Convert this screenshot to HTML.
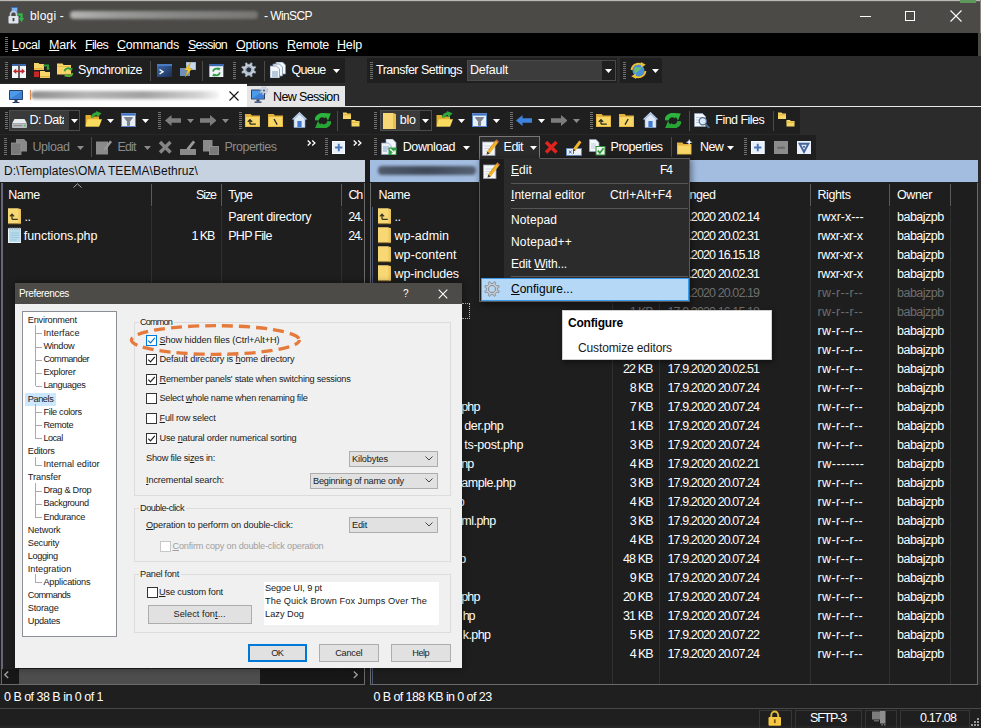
<!DOCTYPE html>
<html><head><meta charset="utf-8"><title>WinSCP</title>
<style>
html,body{margin:0;padding:0;}
body{width:981px;height:728px;overflow:hidden;background:#1b1b1b;font-family:"Liberation Sans", sans-serif;position:relative;}
#r{position:absolute;left:0;top:0;width:981px;height:728px;overflow:hidden;}
#r div,#r svg,#r span{position:absolute;box-sizing:border-box;}
#r u{text-decoration:underline;text-underline-offset:1px;}

.grip{width:3px;background-image:repeating-linear-gradient(to bottom,#707070 0 1px,transparent 1px 2px);}

</style></head><body><div id="r">
<div style="left:0px;top:0px;width:981px;height:33px;background:#4b4a46;"></div>
<div style="left:0px;top:0px;width:981px;height:1px;background:#b8b8b4;"></div>
<div style="left:0px;top:1px;width:981px;height:1px;background:#5c5b57;"></div>
<div style="left:960px;top:0px;width:16px;height:2.5px;background:#5f985c;"></div>
<div style="left:979.5px;top:0px;width:1.5px;height:33px;background:#8a8985;"></div>
<svg style="left:8px;top:7px" width="17" height="17" viewBox="0 0 17 17"><rect x="3" y="0" width="7" height="6" rx="0.600" fill="#3b6fc6"/><rect x="4" y="1" width="5" height="3.500" fill="#7fb3f0"/><path d="M2.500 9.500V7.500a3 3 0 0 1 6 0v2" stroke="#c9ced6" stroke-width="1.600" fill="none"/><rect x="0.500" y="9" width="10" height="7.500" rx="0.800" fill="#dfe4ea"/><rect x="4.600" y="11" width="1.800" height="3.200" fill="#3a3f48"/><path d="M9 7.500h4.500v4" stroke="#2fb34a" stroke-width="2.400" fill="none"/><path d="M10.800 11l2.700 4.200l2.700-4.200z" fill="#2fb34a"/></svg>
<div style="top:8.0px;height:17px;line-height:17px;font-size:12px;color:#fff;white-space:pre;letter-spacing:0.188px;left:30px;">blogi -</div>
<div style="top:8.0px;height:17px;line-height:17px;font-size:12px;color:#fff;white-space:pre;letter-spacing:-0.584px;left:264px;">- WinSCP</div>
<div style="left:70px;top:11px;width:188px;height:8px;background:linear-gradient(90deg,#b4b4b2,#9a9a98 25%,#868684 60%,#777673);filter:blur(1.6px);border-radius:4px;"></div>
<div style="left:860px;top:16px;width:10.5px;height:1px;background:#fff;"></div>
<div style="left:905px;top:11px;width:10px;height:10px;border:1px solid #fff;"></div>
<svg style="left:950px;top:10px" width="12" height="12" viewBox="0 0 12 12"><path d="M0.5 0.5L11.5 11.5M11.5 0.5L0.5 11.5" stroke="#fff" stroke-width="1.1" fill="none"/></svg>
<div style="left:0px;top:33px;width:978px;height:23px;background:#000;"></div>
<div style="left:978px;top:33px;width:3px;height:23px;background:#4a4946;"></div>
<div class="grip" style="left:5px;top:37px;height:16px"></div>
<div style="top:36.3px;height:18px;line-height:18px;font-size:12.5px;color:#fff;white-space:pre;letter-spacing:-0.378px;left:12px;"><u>L</u>ocal</div>
<div style="top:36.3px;height:18px;line-height:18px;font-size:12.5px;color:#fff;white-space:pre;letter-spacing:-0.195px;left:49px;"><u>M</u>ark</div>
<div style="top:36.3px;height:18px;line-height:18px;font-size:12.5px;color:#fff;white-space:pre;letter-spacing:-0.681px;left:85px;"><u>F</u>iles</div>
<div style="top:36.3px;height:18px;line-height:18px;font-size:12.5px;color:#fff;white-space:pre;letter-spacing:-0.240px;left:117px;"><u>C</u>ommands</div>
<div style="top:36.3px;height:18px;line-height:18px;font-size:12.5px;color:#fff;white-space:pre;letter-spacing:-0.783px;left:188px;"><u>S</u>ession</div>
<div style="top:36.3px;height:18px;line-height:18px;font-size:12.5px;color:#fff;white-space:pre;letter-spacing:-0.156px;left:236px;"><u>O</u>ptions</div>
<div style="top:36.3px;height:18px;line-height:18px;font-size:12.5px;color:#fff;white-space:pre;letter-spacing:-0.297px;left:287px;"><u>R</u>emote</div>
<div style="top:36.3px;height:18px;line-height:18px;font-size:12.5px;color:#fff;white-space:pre;letter-spacing:-0.180px;left:337px;"><u>H</u>elp</div>
<div style="left:0px;top:56px;width:981px;height:28px;background:#2b2b2b;"></div>
<div style="left:0px;top:58px;width:345px;height:25px;background:#1f1f1f;"></div>
<div style="left:367px;top:58px;width:250px;height:25px;background:#1f1f1f;"></div>
<div style="left:620px;top:58px;width:42px;height:25px;background:#1f1f1f;"></div>
<div class="grip" style="left:5px;top:62px;height:17px"></div>
<div class="grip" style="left:233px;top:62px;height:17px"></div>
<div class="grip" style="left:370px;top:62px;height:17px"></div>
<div class="grip" style="left:623px;top:62px;height:17px"></div>
<svg style="left:12px;top:63.5px" width="14" height="14" viewBox="0 0 14 14"><rect x="0" y="0" width="6.3" height="14" fill="#f2f6fb"/><rect x="7.7" y="0" width="6.3" height="14" fill="#f2f6fb"/><rect x="0" y="0" width="6.3" height="2" fill="#3c68b0"/><rect x="7.7" y="0" width="6.3" height="2" fill="#3c68b0"/><path d="M1 7.3L4.2 4.6V6.4H9.8V4.6L13 7.3L9.8 10V8.2H4.2V10Z" fill="#c2272d"/></svg>
<svg style="left:34px;top:61.5px" width="17" height="16.5" viewBox="0 0 17 16.5"><path d="M0 1h4.5l1 1h4.5v6h-10z" fill="#f6d569"/><path d="M0 6.8h10" stroke="#d9a93a" stroke-width="1"/><path d="M6 9h4.5l1 1h4.5v6h-10z" fill="#f6d569"/><path d="M6 14.8h10" stroke="#d9a93a" stroke-width="1"/><rect x="0" y="9.5" width="5" height="5.5" fill="#c62828"/><path d="M9.5 3.5h4.5v3.5" stroke="#2f9e3a" stroke-width="2" fill="none"/><path d="M12 6l2 2.6l2-2.6z" fill="#2f9e3a"/></svg>
<svg style="left:57px;top:62px" width="17" height="16" viewBox="0 0 17 16"><path d="M0 1.5h5.5l1.2 1.5H14v9.5H0z" fill="#f6d569"/><path d="M0 4.5h14" stroke="#e7bd4c" stroke-width="1"/><path d="M7.5 9.2a3.6 3.6 0 0 1 6.3-1.6" stroke="#2f9e3a" stroke-width="1.8" fill="none"/><path d="M12.3 5.8l3.6.4l-1.7 3.2z" fill="#2f9e3a"/><path d="M15.5 11a3.6 3.6 0 0 1-6.3 1.8" stroke="#5cb83a" stroke-width="1.8" fill="none"/><path d="M10.6 14.8l-3.5-.6l1.8-3z" fill="#5cb83a"/></svg>
<div style="top:61.3px;height:18px;line-height:18px;font-size:12.5px;color:#fff;white-space:pre;letter-spacing:-0.436px;left:78px;">Synchronize</div>
<svg style="left:156.5px;top:63.7px" width="15" height="13" viewBox="0 0 15 13"><defs><linearGradient id="tg" x1="0" y1="0" x2="1" y2="1"><stop offset="0" stop-color="#3d6cb0"/><stop offset="1" stop-color="#1c2f55"/></linearGradient></defs><rect width="15" height="13" fill="url(#tg)"/><rect width="15" height="2" fill="#4a7cc4"/><path d="M2.5 5.5L6 7.8L2.5 10" stroke="#fff" stroke-width="1.4" fill="none"/></svg>
<svg style="left:179.5px;top:62px" width="16" height="15" viewBox="0 0 16 15"><rect x="6" y="0" width="10" height="8" fill="#9fb6d6"/><rect x="0" y="6" width="10" height="8" fill="#6f8fbd"/><rect x="7" y="1" width="8" height="6" fill="#c8d8ec"/><path d="M10.5 0.5L4.5 8h3.2L5.2 15L12 6.5H8.6z" fill="#f7d02c" stroke="#b98f0c" stroke-width="0.5"/></svg>
<svg style="left:209px;top:63.8px" width="14.5" height="13.5" viewBox="0 0 14.5 13.5"><rect width="14.5" height="13.5" fill="#eef3f9"/><rect width="14.5" height="2.2" fill="#3c68b0"/><rect x="0" y="0" width="14.5" height="13.5" fill="none" stroke="#3c68b0" stroke-width="1"/><path d="M4 7.5a3.4 3.4 0 0 1 5.6-2" stroke="#2e9a3c" stroke-width="1.7" fill="none"/><path d="M8.3 3.4l3.3.5l-1.5 2.9z" fill="#2e9a3c"/><path d="M10.8 8.3a3.4 3.4 0 0 1-5.6 2.2" stroke="#2e9a3c" stroke-width="1.7" fill="none"/><path d="M6.4 12.5l-3.2-.6l1.6-2.7z" fill="#2e9a3c"/></svg>
<svg style="left:241px;top:62.3px" width="15.5" height="15.5" viewBox="0 0 16 16"><g transform="translate(8 8) rotate(22.5)"><path d="M5.60 -1.07L7.55 -0.89L7.55 0.89L5.60 1.07L4.71 3.20L5.97 4.71L4.71 5.97L3.20 4.71L1.07 5.60L0.89 7.55L-0.89 7.55L-1.07 5.60L-3.20 4.71L-4.71 5.97L-5.97 4.71L-4.71 3.20L-5.60 1.07L-7.55 0.89L-7.55 -0.89L-5.60 -1.07L-4.71 -3.20L-5.97 -4.71L-4.71 -5.97L-3.20 -4.71L-1.07 -5.60L-0.89 -7.55L0.89 -7.55L1.07 -5.60L3.20 -4.71L4.71 -5.97L5.97 -4.71L4.71 -3.20Z" fill="#c9d3e0" stroke="#8e9aac" stroke-width="0.600"/><circle r="2.500" fill="#2a3240"/><circle r="3.600" fill="none" stroke="#8e9aac" stroke-width="0.700"/></g></svg>
<svg style="left:270px;top:61.8px" width="16" height="16.5" viewBox="0 0 16 16.5"><path d="M6 0h6.5l3 3v9h-9.5z" fill="#f4f7fb" stroke="#7c93b3" stroke-width="0.8"/><path d="M3 2h6.5l3 3v9h-9.5z" fill="#f4f7fb" stroke="#7c93b3" stroke-width="0.8"/><path d="M0 4h6.5l3 3v9h-9.5z" fill="#f4f7fb" stroke="#7c93b3" stroke-width="0.8"/><path d="M2 10h6M2 12h6M2 14h6" stroke="#6f8fbd" stroke-width="0.9"/></svg>
<div style="top:61.3px;height:18px;line-height:18px;font-size:12.5px;color:#fff;white-space:pre;letter-spacing:-0.706px;left:291.5px;">Queue</div>
<svg style="left:333.0px;top:69px" width="7" height="4" viewBox="0 0 7 4"><path d="M0 0H7L3.5 4Z" fill="#fff"/></svg>
<div style="top:61.3px;height:18px;line-height:18px;font-size:12.5px;color:#fff;white-space:pre;letter-spacing:-0.513px;left:376px;">Transfer Settings</div>
<div style="left:467px;top:60px;width:149px;height:21px;background:#3c3c3c;border:1px solid #4a4a4a;"></div>
<div style="left:602px;top:61px;width:13px;height:19px;background:#1f1f1f;"></div>
<svg style="left:605.0px;top:69px" width="7" height="4" viewBox="0 0 7 4"><path d="M0 0H7L3.5 4Z" fill="#fff"/></svg>
<div style="top:61.3px;height:18px;line-height:18px;font-size:12.5px;color:#fff;white-space:pre;letter-spacing:-0.230px;left:470px;">Default</div>
<svg style="left:630px;top:62px" width="16.5" height="16.5" viewBox="0 0 16.5 16.5"><circle cx="8.5" cy="8.5" r="6" fill="#4a90d8"/><path d="M5 5.5c2-1 4 1 6-.5c.5 2-1 3-2.2 3.2c-.6 2-2.6 1.6-3.200 3.300c-1.700-1.500-1.800-4.200-.6-6z" fill="#6fc06a"/><path d="M1.600 8a7 7 0 0 1 11-5" stroke="#e9c23a" stroke-width="2" fill="none"/><path d="M10.800 0l5 2.800l-4.600 2.600z" fill="#e9c23a"/><path d="M15.400 9a7 7 0 0 1-11 5" stroke="#e9c23a" stroke-width="2" fill="none"/><path d="M6.200 17l-5-2.800l4.600-2.600z" fill="#e9c23a"/></svg>
<svg style="left:652.0px;top:69px" width="7" height="4" viewBox="0 0 7 4"><path d="M0 0H7L3.5 4Z" fill="#fff"/></svg>
<div style="left:150px;top:61px;width:1px;height:20px;background:#4a4a4a;"></div>
<div style="left:202px;top:61px;width:1px;height:20px;background:#4a4a4a;"></div>
<div style="left:264px;top:61px;width:1px;height:20px;background:#4a4a4a;"></div>
<div style="left:0px;top:84px;width:981px;height:24px;background:#2b2b2b;"></div>
<div style="left:345px;top:106px;width:636px;height:1px;background:#e8e8e8;"></div>
<div style="left:0px;top:84px;width:247px;height:23px;background:#ffffff;"></div>
<div style="left:247px;top:86px;width:98px;height:21px;background:#e6e6e6;"></div>
<svg style="left:9px;top:89.5px" width="14" height="13.3" viewBox="0 0 14 13.3"><rect x="0" y="0" width="14" height="10" rx="0.8" fill="#2a3f6a"/><rect x="1" y="1" width="12" height="8" fill="#4c9be8"/><path d="M1 9L13 1V9z" fill="#3b82d6"/><rect x="5.5" y="10" width="3" height="2" fill="#2a3f6a"/><rect x="3.5" y="12" width="7" height="1.300" fill="#2a3f6a"/></svg>
<svg style="left:251px;top:86px" width="18" height="17" viewBox="0 0 18 17"><g transform="translate(0 3.500)"><rect x="0" y="0" width="14" height="10" rx="0.8" fill="#2a3f6a"/><rect x="1" y="1" width="12" height="8" fill="#4c9be8"/><path d="M1 9L13 1V9z" fill="#3b82d6"/><rect x="5.5" y="10" width="3" height="2" fill="#2a3f6a"/><rect x="3.5" y="12" width="7" height="1.300" fill="#2a3f6a"/></g><g transform="translate(13 4.500)"><circle r="3.300" fill="none" stroke="#b9c4d4" stroke-width="2.200" stroke-dasharray="1.600 1"/><circle r="2.600" fill="#c7d0dd"/><circle r="1.100" fill="#5a6a80"/></g></svg>
<div style="top:87.8px;height:18px;line-height:18px;font-size:12.5px;color:#000;white-space:pre;letter-spacing:-0.632px;left:273px;">New Session</div>
<svg style="left:228.5px;top:90.5px" width="10" height="10" viewBox="0 0 10 10"><path d="M0.5 0.5L9.5 9.5M9.5 0.5L0.5 9.5" stroke="#111" stroke-width="1.1" fill="none"/></svg>
<div style="left:31px;top:91px;width:188px;height:8px;background:linear-gradient(90deg,#8f8f8f,#b5b5b5 30%,#a2a2a2 60%,#d4d4d4 90%,#f4f4f4);filter:blur(1.4px);border-radius:4px;"></div>
<div style="left:30px;top:90px;width:1px;height:10px;background:#d98a50;"></div>
<div style="left:0px;top:108px;width:981px;height:52px;background:#2b2b2b;"></div>
<div style="left:0px;top:107.5px;width:800px;height:26px;background:#1f1f1f;"></div>
<div style="left:0px;top:134.5px;width:816px;height:25px;background:#1f1f1f;"></div>
<div style="left:0px;top:133.5px;width:800px;height:1px;background:#282828;"></div>
<div class="grip" style="left:5px;top:112px;height:17px"></div>
<div class="grip" style="left:157.5px;top:112px;height:17px"></div>
<div class="grip" style="left:238.5px;top:112px;height:17px"></div>
<div class="grip" style="left:374px;top:112px;height:17px"></div>
<div class="grip" style="left:509.5px;top:112px;height:17px"></div>
<div class="grip" style="left:590px;top:112px;height:17px"></div>
<div class="grip" style="left:4px;top:138px;height:17px"></div>
<div class="grip" style="left:324.5px;top:138px;height:17px"></div>
<div class="grip" style="left:374px;top:138px;height:17px"></div>
<div class="grip" style="left:744px;top:138px;height:17px"></div>
<div style="left:9px;top:110px;width:71px;height:21px;background:#3a3a3a;border:1px solid #4c4c4c;"></div>
<div style="left:69px;top:111px;width:10px;height:19px;background:#1f1f1f;"></div>
<svg style="left:11.5px;top:119px" width="15" height="9" viewBox="0 0 15 9"><path d="M2.5 0h10l2.5 4.5H0z" fill="#e9ecee"/><rect x="0" y="4.5" width="15" height="4.5" rx="0.8" fill="#b9bdc1"/><rect x="1.5" y="6" width="9" height="1.2" fill="#8a8f94"/><rect x="12" y="5.8" width="1.6" height="1.6" fill="#4fc04f"/></svg>
<div style="top:111.3px;height:18px;line-height:18px;font-size:12.5px;color:#fff;white-space:pre;letter-spacing:-0.556px;left:29.5px;width:34.5px;overflow:hidden;">D: Data</div>
<svg style="left:71.0px;top:119.0px" width="7" height="4" viewBox="0 0 7 4"><path d="M0 0H7L3.5 4Z" fill="#fff"/></svg>
<svg style="left:85px;top:111.3px" width="17" height="16" viewBox="0 0 17 16"><path d="M0.5 4h5l1.3 1.6H14v10H0.5z" fill="#e2ae2e"/><path d="M2.6 8.2H17l-2.8 7.4H0.5z" fill="#fadc5e"/><path d="M7 6.800a5 5 0 0 1 6-4" stroke="#2fa83c" stroke-width="2.800" fill="none"/><path d="M10.800 0l5.800 2.300l-4.400 4.300z" fill="#2fa83c"/></svg>
<svg style="left:107.0px;top:119.0px" width="7" height="4" viewBox="0 0 7 4"><path d="M0 0H7L3.5 4Z" fill="#fff"/></svg>
<svg style="left:120.5px;top:113.3px" width="15" height="14" viewBox="0 0 15 14"><rect width="15" height="14" fill="#e9f0fa"/><rect width="15" height="2.6" fill="#3f74c4"/><rect x="0.5" y="0.5" width="14" height="13" fill="none" stroke="#5a86c8" stroke-width="1"/><path d="M3.3 4.6h8.4l-3.1 3.8v4h-2.2v-4z" fill="#7d848c" stroke="#5a6068" stroke-width="0.6"/></svg>
<svg style="left:142.0px;top:119.0px" width="7" height="4" viewBox="0 0 7 4"><path d="M0 0H7L3.5 4Z" fill="#fff"/></svg>
<svg style="left:164.6px;top:115px" width="16.5" height="11" viewBox="0 0 16.5 11"><path d="M0 5.5L6.5 0V3.2H16.5V7.8H6.5V11z" fill="#7d7d7d"/></svg>
<svg style="left:186.5px;top:119.0px" width="7" height="4" viewBox="0 0 7 4"><path d="M0 0H7L3.5 4Z" fill="#8a8a8a"/></svg>
<svg style="left:199.8px;top:115px" width="16.5" height="11" viewBox="0 0 16.5 11"><g transform="translate(16.5 0) scale(-1 1)"><path d="M0 5.5L6.5 0V3.2H16.5V7.8H6.5V11z" fill="#7d7d7d"/></g></svg>
<svg style="left:221.5px;top:119.0px" width="7" height="4" viewBox="0 0 7 4"><path d="M0 0H7L3.5 4Z" fill="#8a8a8a"/></svg>
<svg style="left:245.3px;top:113px" width="15" height="14" viewBox="0 0 15 14"><path d="M0 1h5.6l1.3 1.6H15v11.4H0z" fill="#e4b23a"/><rect x="0.8" y="4" width="13.4" height="9.2" fill="#f7d768"/><path d="M5 11.2V7M2.8 8.9L5 6.6L7.2 8.9M5 11.2H10.8" stroke="#2b2b18" stroke-width="1.3" fill="none"/></svg>
<svg style="left:268.2px;top:113px" width="15" height="14" viewBox="0 0 15 14"><path d="M0 1h5.6l1.3 1.6H15v11.4H0z" fill="#e4b23a"/><rect x="0.8" y="4" width="13.4" height="9.2" fill="#f7d768"/><path d="M6 6l3.2 5.6" stroke="#2b2b18" stroke-width="1.3"/></svg>
<svg style="left:291.5px;top:112.3px" width="15" height="15.5" viewBox="0 0 15 15.5"><path d="M7.5 0L15 7.2h-2V15.5H2V7.2H0z" fill="#dfe9f6"/><path d="M7.5 0.3L15 7.4h-1.6L7.5 2L1.6 7.4H0z" fill="#a9c3e4"/><rect x="5.4" y="9" width="4.2" height="6.5" fill="#3f7ad0"/><path d="M2 7.2L7.5 2L13 7.2V15.5H2z" fill="none" stroke="#8aa9d4" stroke-width="0.6"/></svg>
<svg style="left:314.8px;top:112.7px" width="16" height="15.5" viewBox="0 0 16 15.5"><path d="M1.600 7.400a5.600 5.600 0 0 1 9.600-3.600" stroke="#2db43c" stroke-width="4.200" fill="none"/><path d="M8.600 0l7.200 0.600l-2.800 6.800z" fill="#2db43c"/><path d="M14.400 8.100a5.600 5.600 0 0 1-9.600 3.600" stroke="#27a636" stroke-width="4.200" fill="none"/><path d="M7.400 15.500l-7.200-0.600l2.800-6.800z" fill="#27a636"/></svg>
<div style="left:337px;top:111px;width:1px;height:20px;background:#4a4a4a;"></div>
<svg style="left:343px;top:112.3px" width="17" height="15" viewBox="0 0 17 15"><path d="M0 0.500h3.400l1 1.100H8v5.400H0z" fill="#f6d765"/><path d="M0 2.800h8" stroke="#dcae3a" stroke-width="0.900"/><path d="M8.500 8h3.400l1 1.100H16.500v5.400H8.500z" fill="#f6d765"/><path d="M8.500 10.300h8" stroke="#dcae3a" stroke-width="0.900"/></svg>
<div style="left:379.5px;top:110px;width:52.5px;height:21px;background:#3a3a3a;border:1px solid #4c4c4c;"></div>
<div style="left:420px;top:111px;width:11px;height:19px;background:#1f1f1f;"></div>
<svg style="left:383px;top:112.5px" width="13" height="16" viewBox="0 0 13 16"><path d="M0 0H10V1H13V16H0Z" fill="#f7d774"/><path d="M10 0V16H13V1Z" fill="#e9bf4f"/></svg>
<div style="top:111.3px;height:18px;line-height:18px;font-size:12.5px;color:#fff;white-space:pre;letter-spacing:-0.229px;left:399.8px;">blo</div>
<svg style="left:422.0px;top:119.0px" width="7" height="4" viewBox="0 0 7 4"><path d="M0 0H7L3.5 4Z" fill="#fff"/></svg>
<svg style="left:435.6px;top:111.3px" width="17" height="16" viewBox="0 0 17 16"><path d="M0.5 4h5l1.3 1.6H14v10H0.5z" fill="#e2ae2e"/><path d="M2.6 8.2H17l-2.8 7.4H0.5z" fill="#fadc5e"/><path d="M7 6.800a5 5 0 0 1 6-4" stroke="#2fa83c" stroke-width="2.800" fill="none"/><path d="M10.800 0l5.800 2.300l-4.400 4.300z" fill="#2fa83c"/></svg>
<svg style="left:457.9px;top:119.0px" width="7" height="4" viewBox="0 0 7 4"><path d="M0 0H7L3.5 4Z" fill="#fff"/></svg>
<svg style="left:471.5px;top:113.3px" width="15" height="14" viewBox="0 0 15 14"><rect width="15" height="14" fill="#e9f0fa"/><rect width="15" height="2.6" fill="#3f74c4"/><rect x="0.5" y="0.5" width="14" height="13" fill="none" stroke="#5a86c8" stroke-width="1"/><path d="M3.3 4.6h8.4l-3.1 3.8v4h-2.2v-4z" fill="#7d848c" stroke="#5a6068" stroke-width="0.6"/></svg>
<svg style="left:492.7px;top:119.0px" width="7" height="4" viewBox="0 0 7 4"><path d="M0 0H7L3.5 4Z" fill="#fff"/></svg>
<svg style="left:515.7px;top:115px" width="16.5" height="11" viewBox="0 0 16.5 11"><path d="M0 5.5L6.5 0V3.2H16.5V7.8H6.5V11z" fill="#3d82dc"/></svg>
<svg style="left:538.0px;top:119.0px" width="7" height="4" viewBox="0 0 7 4"><path d="M0 0H7L3.5 4Z" fill="#fff"/></svg>
<svg style="left:550.7px;top:115px" width="16.5" height="11" viewBox="0 0 16.5 11"><g transform="translate(16.5 0) scale(-1 1)"><path d="M0 5.5L6.5 0V3.2H16.5V7.8H6.5V11z" fill="#7d7d7d"/></g></svg>
<svg style="left:572.5px;top:119.0px" width="7" height="4" viewBox="0 0 7 4"><path d="M0 0H7L3.5 4Z" fill="#8a8a8a"/></svg>
<svg style="left:596px;top:113px" width="15" height="14" viewBox="0 0 15 14"><path d="M0 1h5.6l1.3 1.6H15v11.4H0z" fill="#e4b23a"/><rect x="0.8" y="4" width="13.4" height="9.2" fill="#f7d768"/><path d="M5 11.2V7M2.8 8.9L5 6.6L7.2 8.9M5 11.2H10.8" stroke="#2b2b18" stroke-width="1.3" fill="none"/></svg>
<svg style="left:619px;top:113px" width="15" height="14" viewBox="0 0 15 14"><path d="M0 1h5.6l1.3 1.6H15v11.4H0z" fill="#e4b23a"/><rect x="0.8" y="4" width="13.4" height="9.2" fill="#f7d768"/><path d="M9.2 6L6 11.6" stroke="#2b2b18" stroke-width="1.3"/></svg>
<svg style="left:643px;top:112.3px" width="15" height="15.5" viewBox="0 0 15 15.5"><path d="M7.5 0L15 7.2h-2V15.5H2V7.2H0z" fill="#dfe9f6"/><path d="M7.5 0.3L15 7.4h-1.6L7.5 2L1.6 7.4H0z" fill="#a9c3e4"/><rect x="5.4" y="9" width="4.2" height="6.5" fill="#3f7ad0"/><path d="M2 7.2L7.5 2L13 7.2V15.5H2z" fill="none" stroke="#8aa9d4" stroke-width="0.6"/></svg>
<svg style="left:665px;top:112.7px" width="16" height="15.5" viewBox="0 0 16 15.5"><path d="M1.600 7.400a5.600 5.600 0 0 1 9.600-3.600" stroke="#2db43c" stroke-width="4.200" fill="none"/><path d="M8.600 0l7.200 0.600l-2.800 6.800z" fill="#2db43c"/><path d="M14.400 8.100a5.600 5.600 0 0 1-9.600 3.600" stroke="#27a636" stroke-width="4.200" fill="none"/><path d="M7.400 15.500l-7.200-0.600l2.800-6.800z" fill="#27a636"/></svg>
<div style="left:689px;top:111px;width:1px;height:20px;background:#4a4a4a;"></div>
<svg style="left:694.3px;top:112.5px" width="16" height="16" viewBox="0 0 16 16"><path d="M0.5 0.5h8l3 3v10h-11z" fill="#f2f6fb" stroke="#8fa2bd" stroke-width="0.8"/><path d="M2 4.5h5M2 7h3M2 9.5h3" stroke="#b3c2d6" stroke-width="0.9"/><circle cx="8.8" cy="8.2" r="3.6" fill="#d8e8f8" stroke="#54708f" stroke-width="1.2"/><path d="M11.4 11l3.8 4" stroke="#54708f" stroke-width="1.8"/></svg>
<div style="top:111.3px;height:18px;line-height:18px;font-size:12.5px;color:#fff;white-space:pre;letter-spacing:-0.519px;left:715.3px;">Find Files</div>
<div style="left:772.5px;top:111px;width:1px;height:20px;background:#4a4a4a;"></div>
<svg style="left:777.7px;top:112.3px" width="17" height="15" viewBox="0 0 17 15"><path d="M0 0.500h3.400l1 1.100H8v5.400H0z" fill="#f6d765"/><path d="M0 2.800h8" stroke="#dcae3a" stroke-width="0.900"/><path d="M8.500 8h3.400l1 1.100H16.500v5.400H8.500z" fill="#f6d765"/><path d="M8.500 10.300h8" stroke="#dcae3a" stroke-width="0.900"/></svg>
<svg style="left:10.6px;top:139px" width="16.5" height="15.5" viewBox="0 0 16.5 15.5"><path d="M5 0h8l3.5 3.5v9H5z" fill="#8a8a8a"/><rect x="0" y="4" width="10" height="11.5" fill="#7a7a7a"/><rect x="0" y="4" width="10" height="11.5" fill="none" stroke="#979797" stroke-width="0.8"/></svg>
<div style="top:138.2px;height:18px;line-height:18px;font-size:12.5px;color:#8c8c8c;white-space:pre;letter-spacing:-0.438px;left:32.5px;">Upload</div>
<svg style="left:76.9px;top:145.7px" width="7" height="4" viewBox="0 0 7 4"><path d="M0 0H7L3.5 4Z" fill="#8a8a8a"/></svg>
<div style="left:90.5px;top:137px;width:1px;height:20px;background:#4a4a4a;"></div>
<svg style="left:96.3px;top:139px" width="16" height="15.5" viewBox="0 0 16 15.5"><rect x="0" y="2.5" width="12" height="13" fill="#8a8a8a"/><path d="M8 9L14 1.5l2 1.6L10.2 10.6L7.4 11.6z" fill="#9a9a9a"/></svg>
<div style="top:138.2px;height:18px;line-height:18px;font-size:12.5px;color:#8c8c8c;white-space:pre;letter-spacing:-0.887px;left:117.6px;">Edit</div>
<svg style="left:143.7px;top:145.7px" width="7" height="4" viewBox="0 0 7 4"><path d="M0 0H7L3.5 4Z" fill="#8a8a8a"/></svg>
<svg style="left:157.8px;top:139.6px" width="14.5" height="14.5" viewBox="0 0 14.5 14.5"><path d="M2 2L12.5 12.5M12.5 2L2 12.5" stroke="#858585" stroke-width="3.4" stroke-linecap="butt" fill="none"/></svg>
<svg style="left:180.3px;top:139.5px" width="16" height="15" viewBox="0 0 16 15"><rect x="0" y="9" width="16" height="6" fill="#8a8a8a"/><path d="M6.5 8.5L13 0.5l2.2 1.8L8.8 10.2z" fill="#9a9a9a"/></svg>
<svg style="left:203px;top:139.5px" width="15.5" height="15" viewBox="0 0 15.5 15"><rect x="0" y="0" width="9.5" height="11.5" fill="#8a8a8a"/><rect x="6.5" y="6.5" width="9" height="8.5" fill="#7a7a7a" stroke="#9a9a9a" stroke-width="0.8"/></svg>
<div style="top:138.2px;height:18px;line-height:18px;font-size:12.5px;color:#8c8c8c;white-space:pre;letter-spacing:-0.498px;left:224.5px;">Properties</div>
<svg style="left:307px;top:139.5px" width="9.5" height="6" viewBox="0 0 9.5 6"><path d="M0.7 0.5L3.4 3L0.7 5.5M5.2 0.5L7.900 3L5.2 5.5" stroke="#fff" stroke-width="1.300" fill="none"/></svg>
<svg style="left:352.5px;top:139.5px" width="9.5" height="6" viewBox="0 0 9.5 6"><path d="M0.7 0.5L3.4 3L0.7 5.5M5.2 0.5L7.900 3L5.2 5.5" stroke="#fff" stroke-width="1.300" fill="none"/></svg>
<svg style="left:331.7px;top:140.8px" width="13.5" height="13" viewBox="0 0 13.5 13"><rect width="13.5" height="13" fill="#e8f0fb"/><rect x="0.5" y="0.5" width="12.5" height="12" fill="none" stroke="#f8fbff" stroke-width="1"/><path d="M6.75 2.800v7.400M3.100 6.500h7.300" stroke="#4a76b8" stroke-width="1.900"/></svg>
<svg style="left:381px;top:139px" width="16" height="16" viewBox="0 0 16 16"><path d="M5 0h6.5l3.5 3.5v8H5z" fill="#f2f6fa" stroke="#8fa7c4" stroke-width="0.7"/><path d="M0.5 4h7l2.5 2.5v9h-9.5z" fill="#eaf1f8" stroke="#7f9cc0" stroke-width="0.7"/><path d="M2 8h6M2 10h6M2 12h4" stroke="#7fa0c8" stroke-width="0.9"/><rect x="7.5" y="8.5" width="8" height="7.5" fill="#2ea040"/><path d="M9 10l5 4.5M14 11.2v3.3h-3.4" stroke="#fff" stroke-width="1.3" fill="none"/></svg>
<div style="top:138.2px;height:18px;line-height:18px;font-size:12.5px;color:#fff;white-space:pre;letter-spacing:-0.387px;left:402.7px;">Download</div>
<svg style="left:462.9px;top:145.7px" width="7" height="4" viewBox="0 0 7 4"><path d="M0 0H7L3.5 4Z" fill="#fff"/></svg>
<div style="left:479px;top:136px;width:61px;height:23px;background:#2b2b2b;border:1px solid #777;border-bottom:none;"></div>
<svg style="left:481.8px;top:139px" width="17" height="17" viewBox="0 0 17 17"><rect x="0.5" y="3" width="12.5" height="13.5" fill="#f4f6f9" stroke="#9aa5b4" stroke-width="0.8"/><path d="M2.5 7h8M2.5 9.5h8M2.5 12h6" stroke="#c9d2de" stroke-width="0.9"/><path d="M5.2 12.6L13.6 1.6l2.6 2L7.8 14.6L4.6 15.6z" fill="#f1b32c"/><path d="M13.6 1.6l2.6 2l0.8-1.2l-2.4-1.9z" fill="#d96b5a"/><path d="M5.2 12.6l2.6 2L4.6 15.6z" fill="#3a3a3a"/><path d="M6.4 11.2L14.7 0.6" stroke="#c98a1a" stroke-width="0.7"/></svg>
<div style="top:138.2px;height:18px;line-height:18px;font-size:12.5px;color:#fff;white-space:pre;letter-spacing:-0.512px;left:503.6px;">Edit</div>
<svg style="left:529.5px;top:145.7px" width="7" height="4" viewBox="0 0 7 4"><path d="M0 0H7L3.5 4Z" fill="#fff"/></svg>
<svg style="left:543.7px;top:139.6px" width="14.5" height="14.5" viewBox="0 0 14.5 14.5"><path d="M2 2L12.5 12.5M12.5 2L2 12.5" stroke="#e0231d" stroke-width="3.4" stroke-linecap="butt" fill="none"/></svg>
<svg style="left:566px;top:139.5px" width="16" height="16" viewBox="0 0 16 16"><rect x="0.4" y="8.5" width="15.2" height="7" fill="#f1f5fa" stroke="#5d88c4" stroke-width="0.9"/><path d="M3 10.5l2.6 3M5.6 10.5l-2.6 3M7.5 10.2v3.6" stroke="#3a62a8" stroke-width="1"/><path d="M7.2 8.6L13.2 0.6l2.3 1.7L9.6 10.4L7 11.2z" fill="#f1b32c"/><path d="M7.2 8.6l2.4 1.8L7 11.2z" fill="#4a3a2a"/></svg>
<svg style="left:589.3px;top:139px" width="16.5" height="16.5" viewBox="0 0 16.5 16.5"><path d="M0.5 0.5h6.5l3 3v9h-9.5z" fill="#f4f7fb" stroke="#8fa2bd" stroke-width="0.8"/><path d="M2 5h5M2 7h5M2 9h4" stroke="#b8c6d8" stroke-width="0.9"/><rect x="7" y="7.5" width="9" height="8.5" fill="#eef7ee" stroke="#2e8f3d" stroke-width="1"/><path d="M8.8 11.6l2.1 2.3l3.6-4.6" stroke="#2e9a3c" stroke-width="1.7" fill="none"/></svg>
<div style="top:138.2px;height:18px;line-height:18px;font-size:12.5px;color:#fff;white-space:pre;letter-spacing:-0.498px;left:610.6px;">Properties</div>
<div style="left:671px;top:137px;width:1px;height:20px;background:#4a4a4a;"></div>
<svg style="left:677px;top:139px" width="15.5" height="15.5" viewBox="0 0 15.5 15.5"><path d="M0 3.5h5.4l1.3 1.6H14.5v10.4H0z" fill="#e4b23a"/><rect x="0.8" y="6.6" width="12.9" height="8.2" fill="#f7d768"/><path d="M12.2 0l0.9 2.3l2.4.9l-2.4.9l-.9 2.3l-.9-2.3l-2.4-.9l2.4-.9z" fill="#eaf2ff"/></svg>
<div style="top:138.2px;height:18px;line-height:18px;font-size:12.5px;color:#fff;white-space:pre;letter-spacing:-0.505px;left:699.9px;">New</div>
<svg style="left:727.0px;top:145.7px" width="7" height="4" viewBox="0 0 7 4"><path d="M0 0H7L3.5 4Z" fill="#fff"/></svg>
<svg style="left:751.3px;top:140.7px" width="13.5" height="13" viewBox="0 0 13.5 13"><rect width="13.5" height="13" fill="#e8f0fb"/><rect x="0.5" y="0.5" width="12.5" height="12" fill="none" stroke="#f8fbff" stroke-width="1"/><path d="M6.75 2.800v7.400M3.100 6.500h7.300" stroke="#4a76b8" stroke-width="1.900"/></svg>
<svg style="left:774px;top:140.5px" width="14" height="13.5" viewBox="0 0 14 13.5"><rect width="14" height="13.5" fill="#8c8c8c"/><path d="M3.2 6.75h7.6" stroke="#6a6a6a" stroke-width="2.2"/></svg>
<svg style="left:797px;top:140.5px" width="14" height="13.5" viewBox="0 0 14 13.5"><rect width="14" height="13.5" fill="#e8f0fb"/><path d="M2.600 2.800h8.800L7 11z" fill="none" stroke="#46649a" stroke-width="1.900"/><circle cx="7" cy="5.800" r="1.100" fill="#46649a"/></svg>
<div style="left:0px;top:160px;width:981px;height:23px;background:#1b1b1b;"></div>
<div style="left:0px;top:160px;width:365px;height:22px;background:#c7d2e0;"></div>
<div style="left:370px;top:160px;width:608px;height:22px;background:#a3bde1;"></div>
<div style="top:162.5px;height:17px;line-height:17px;font-size:12px;color:#101010;white-space:pre;letter-spacing:0.048px;left:4px;">D:\Templates\OMA TEEMA\Bethruz\</div>
<div style="left:378px;top:166px;width:98px;height:9px;background:linear-gradient(90deg,#4f5a6b,#3e4857 50%,#566273);filter:blur(1.5px);border-radius:4px;"></div>
<div style="left:0px;top:182px;width:981px;height:506px;background:#1e1e1e;"></div>
<div style="left:365px;top:160px;width:5px;height:548px;background:#1c1c1c;"></div>
<div style="left:1px;top:183px;width:1.5px;height:502px;background:#66667a;"></div>
<div style="left:364px;top:183px;width:1px;height:502px;background:#6a6a6a;"></div>
<div style="left:0px;top:684px;width:365px;height:1px;background:#6a6a6a;"></div>
<div style="left:370px;top:183px;width:1px;height:502px;background:#6a6a6a;"></div>
<div style="left:372px;top:207px;width:1px;height:478px;background:#4a5676;"></div>
<div style="left:977px;top:183px;width:1px;height:502px;background:#6a6a6a;"></div>
<div style="left:370px;top:684px;width:608px;height:1px;background:#6a6a6a;"></div>
<div style="left:978px;top:160px;width:3px;height:548px;background:#2b2b2b;"></div>
<div style="left:151px;top:207px;width:1px;height:462px;background:#303030;"></div>
<div style="left:151px;top:184px;width:1px;height:22px;background:#5a5a5a;"></div>
<div style="left:220.7px;top:207px;width:1px;height:462px;background:#303030;"></div>
<div style="left:220.7px;top:184px;width:1px;height:22px;background:#5a5a5a;"></div>
<div style="left:341.3px;top:207px;width:1px;height:462px;background:#303030;"></div>
<div style="left:341.3px;top:184px;width:1px;height:22px;background:#5a5a5a;"></div>
<div style="left:611.5px;top:207px;width:1px;height:477px;background:#303030;"></div>
<div style="left:658.7px;top:207px;width:1px;height:477px;background:#303030;"></div>
<div style="left:810px;top:207px;width:1px;height:477px;background:#303030;"></div>
<div style="left:889px;top:207px;width:1px;height:477px;background:#303030;"></div>
<div style="left:950px;top:207px;width:1px;height:477px;background:#303030;"></div>
<div style="left:658px;top:184px;width:1px;height:22px;background:#5a5a5a;"></div>
<div style="left:810px;top:184px;width:1px;height:22px;background:#5a5a5a;"></div>
<div style="left:889px;top:184px;width:1px;height:22px;background:#5a5a5a;"></div>
<div style="left:950px;top:184px;width:1px;height:22px;background:#5a5a5a;"></div>
<div style="top:185.8px;height:18px;line-height:18px;font-size:12.5px;color:#fff;white-space:pre;letter-spacing:-0.461px;left:8.3px;">Name</div>
<div style="top:185.8px;height:18px;line-height:18px;font-size:12.5px;color:#fff;white-space:pre;letter-spacing:-1.082px;right:765.0px;">Size</div>
<div style="top:185.8px;height:18px;line-height:18px;font-size:12.5px;color:#fff;white-space:pre;letter-spacing:-0.777px;left:228.2px;">Type</div>
<div style="top:185.8px;height:18px;line-height:18px;font-size:12.5px;color:#fff;white-space:pre;letter-spacing:-1.092px;left:348.4px;">Ch</div>
<div style="top:185.8px;height:18px;line-height:18px;font-size:12.5px;color:#fff;white-space:pre;letter-spacing:-0.461px;left:378.5px;">Name</div>
<div style="top:185.8px;height:18px;line-height:18px;font-size:12.5px;color:#fff;white-space:pre;letter-spacing:-0.453px;left:689.5px;">nged</div>
<div style="top:185.8px;height:18px;line-height:18px;font-size:12.5px;color:#fff;white-space:pre;letter-spacing:-0.406px;left:817.5px;">Rights</div>
<div style="top:185.8px;height:18px;line-height:18px;font-size:12.5px;color:#fff;white-space:pre;letter-spacing:-0.366px;left:897px;">Owner</div>
<svg style="left:73px;top:182.5px" width="9" height="5" viewBox="0 0 9 5"><path d="M0.5 4.5L4.5 0.8L8.5 4.5" stroke="#aaa" stroke-width="1" fill="none"/></svg>
<svg style="left:7.5px;top:208.29999999999998px" width="13" height="16.500" viewBox="0 0 13 16.500"><path d="M0 0.300H10.300V1.300H12.800V15.800H0Z" fill="#f7d875"/><path d="M10.300 0.300V15.800H12.800V1.300Z" fill="#efca60"/><path d="M0 16.100H12.800" stroke="#5b4718" stroke-width="0.800"/><path d="M4 11.300V6.500M1.900 8.400L4 6.100L6.100 8.400M4 11.300H9.800" stroke="#3a3a20" stroke-width="1.300" fill="none"/></svg>
<div style="top:207.7px;height:18px;line-height:18px;font-size:12.5px;color:#fff;white-space:pre;letter-spacing:-0.477px;left:24.5px;">..</div>
<div style="top:207.7px;height:18px;line-height:18px;font-size:12.5px;color:#fff;white-space:pre;letter-spacing:-0.327px;left:228.2px;">Parent directory</div>
<div style="top:207.7px;height:18px;line-height:18px;font-size:12.5px;color:#fff;white-space:pre;letter-spacing:-1.130px;left:348.2px;">24.</div>
<svg style="left:7.5px;top:227.2px" width="13.5" height="16" viewBox="0 0 13.5 16"><rect x="0.5" y="1.8" width="12.5" height="13.7" fill="#b9dcec" stroke="#eef6fa"/><path d="M2 0.5v2.6M4.4 0.5v2.6M6.800 0.5v2.6M9.200 0.5v2.6M11.600 0.5v2.6" stroke="#9fb3c0" stroke-width="1"/><path d="M2.500 6h8.500M2.500 8.300h8.500M2.500 10.600h8.500M2.500 12.900h6" stroke="#9cc6da" stroke-width="1"/></svg>
<div style="top:226.7px;height:18px;line-height:18px;font-size:12.5px;color:#fff;white-space:pre;letter-spacing:-0.066px;left:23.8px;">functions.php</div>
<div style="top:226.7px;height:18px;line-height:18px;font-size:12.5px;color:#fff;white-space:pre;letter-spacing:-1.102px;right:766.7px;">1 KB</div>
<div style="top:226.7px;height:18px;line-height:18px;font-size:12.5px;color:#fff;white-space:pre;letter-spacing:-0.699px;left:228.2px;">PHP File</div>
<div style="top:226.7px;height:18px;line-height:18px;font-size:12.5px;color:#fff;white-space:pre;letter-spacing:-1.130px;left:348.2px;">24.</div>
<svg style="left:378px;top:208.29999999999998px" width="13" height="16.500" viewBox="0 0 13 16.500"><path d="M0 0.300H10.300V1.300H12.800V15.800H0Z" fill="#f7d875"/><path d="M10.300 0.300V15.800H12.800V1.300Z" fill="#efca60"/><path d="M0 16.100H12.800" stroke="#5b4718" stroke-width="0.800"/><path d="M4 11.300V6.500M1.900 8.400L4 6.100L6.100 8.400M4 11.300H9.800" stroke="#3a3a20" stroke-width="1.300" fill="none"/></svg>
<div style="top:207.7px;height:18px;line-height:18px;font-size:12.5px;color:#fff;white-space:pre;letter-spacing:-0.477px;left:394.5px;">..</div>
<svg style="left:378px;top:227.29999999999998px" width="13" height="16.500" viewBox="0 0 13 16.500"><path d="M0 0.300H10.300V1.300H12.800V15.800H0Z" fill="#f7d875"/><path d="M10.300 0.300V15.800H12.800V1.300Z" fill="#efca60"/><path d="M0 16.100H12.800" stroke="#5b4718" stroke-width="0.800"/></svg>
<div style="top:226.7px;height:18px;line-height:18px;font-size:12.5px;color:#fff;white-space:pre;letter-spacing:0.039px;left:394.5px;">wp-admin</div>
<svg style="left:378px;top:246.4px" width="13" height="16.500" viewBox="0 0 13 16.500"><path d="M0 0.300H10.300V1.300H12.800V15.800H0Z" fill="#f7d875"/><path d="M10.300 0.300V15.800H12.800V1.300Z" fill="#efca60"/><path d="M0 16.100H12.800" stroke="#5b4718" stroke-width="0.800"/></svg>
<div style="top:245.8px;height:18px;line-height:18px;font-size:12.5px;color:#fff;white-space:pre;letter-spacing:0.084px;left:394.5px;">wp-content</div>
<svg style="left:378px;top:265.40000000000003px" width="13" height="16.500" viewBox="0 0 13 16.500"><path d="M0 0.300H10.300V1.300H12.800V15.800H0Z" fill="#f7d875"/><path d="M10.300 0.300V15.800H12.800V1.300Z" fill="#efca60"/><path d="M0 16.100H12.800" stroke="#5b4718" stroke-width="0.800"/></svg>
<div style="top:264.8px;height:18px;line-height:18px;font-size:12.5px;color:#fff;white-space:pre;letter-spacing:-0.138px;left:394.5px;">wp-includes</div>
<div style="top:207.7px;height:18px;line-height:18px;font-size:12.5px;color:#fff;white-space:pre;letter-spacing:-0.892px;left:667.5px;">17.9.2020 20.02.14</div>
<div style="top:207.7px;height:18px;line-height:18px;font-size:12.5px;color:#fff;white-space:pre;letter-spacing:-0.057px;left:817.5px;">rwxr-x---</div>
<div style="top:207.7px;height:18px;line-height:18px;font-size:12.5px;color:#fff;white-space:pre;letter-spacing:-0.506px;left:897px;">babajzpb</div>
<div style="top:226.7px;height:18px;line-height:18px;font-size:12.5px;color:#fff;white-space:pre;letter-spacing:-0.892px;left:667.5px;">17.9.2020 20.02.31</div>
<div style="top:226.7px;height:18px;line-height:18px;font-size:12.5px;color:#fff;white-space:pre;letter-spacing:-0.399px;left:817.5px;">rwxr-xr-x</div>
<div style="top:226.7px;height:18px;line-height:18px;font-size:12.5px;color:#fff;white-space:pre;letter-spacing:-0.506px;left:897px;">babajzpb</div>
<div style="top:245.8px;height:18px;line-height:18px;font-size:12.5px;color:#fff;white-space:pre;letter-spacing:-0.892px;left:667.5px;">17.9.2020 16.15.18</div>
<div style="top:245.8px;height:18px;line-height:18px;font-size:12.5px;color:#fff;white-space:pre;letter-spacing:-0.399px;left:817.5px;">rwxr-xr-x</div>
<div style="top:245.8px;height:18px;line-height:18px;font-size:12.5px;color:#fff;white-space:pre;letter-spacing:-0.506px;left:897px;">babajzpb</div>
<div style="top:264.8px;height:18px;line-height:18px;font-size:12.5px;color:#fff;white-space:pre;letter-spacing:-0.892px;left:667.5px;">17.9.2020 20.02.31</div>
<div style="top:264.8px;height:18px;line-height:18px;font-size:12.5px;color:#fff;white-space:pre;letter-spacing:-0.399px;left:817.5px;">rwxr-xr-x</div>
<div style="top:264.8px;height:18px;line-height:18px;font-size:12.5px;color:#fff;white-space:pre;letter-spacing:-0.506px;left:897px;">babajzpb</div>
<div style="top:283.8px;height:18px;line-height:18px;font-size:12.5px;color:#6e6e6e;white-space:pre;letter-spacing:-0.892px;left:667.5px;">17.9.2020 20.02.19</div>
<div style="top:283.8px;height:18px;line-height:18px;font-size:12.5px;color:#6e6e6e;white-space:pre;letter-spacing:0.352px;left:817.5px;">rw-r--r--</div>
<div style="top:283.8px;height:18px;line-height:18px;font-size:12.5px;color:#6e6e6e;white-space:pre;letter-spacing:-0.506px;left:897px;">babajzpb</div>
<div style="top:283.8px;height:18px;line-height:18px;font-size:12.5px;color:#6e6e6e;white-space:pre;letter-spacing:-1.102px;right:328.5px;">1 KB</div>
<div style="top:302.9px;height:18px;line-height:18px;font-size:12.5px;color:#6e6e6e;white-space:pre;letter-spacing:-0.892px;left:667.5px;">17.9.2020 16.15.18</div>
<div style="top:302.9px;height:18px;line-height:18px;font-size:12.5px;color:#6e6e6e;white-space:pre;letter-spacing:0.352px;left:817.5px;">rw-r--r--</div>
<div style="top:302.9px;height:18px;line-height:18px;font-size:12.5px;color:#6e6e6e;white-space:pre;letter-spacing:-0.506px;left:897px;">babajzpb</div>
<div style="top:302.9px;height:18px;line-height:18px;font-size:12.5px;color:#6e6e6e;white-space:pre;letter-spacing:-1.102px;right:328.5px;">1 KB</div>
<div style="top:321.9px;height:18px;line-height:18px;font-size:12.5px;color:#fff;white-space:pre;letter-spacing:-0.892px;left:667.5px;">17.9.2020 20.07.24</div>
<div style="top:321.9px;height:18px;line-height:18px;font-size:12.5px;color:#fff;white-space:pre;letter-spacing:0.352px;left:817.5px;">rw-r--r--</div>
<div style="top:321.9px;height:18px;line-height:18px;font-size:12.5px;color:#fff;white-space:pre;letter-spacing:-0.506px;left:897px;">babajzpb</div>
<div style="top:321.9px;height:18px;line-height:18px;font-size:12.5px;color:#fff;white-space:pre;letter-spacing:-1.102px;right:328.5px;">1 KB</div>
<div style="top:340.9px;height:18px;line-height:18px;font-size:12.5px;color:#fff;white-space:pre;letter-spacing:-0.892px;left:667.5px;">17.9.2020 20.07.24</div>
<div style="top:340.9px;height:18px;line-height:18px;font-size:12.5px;color:#fff;white-space:pre;letter-spacing:0.352px;left:817.5px;">rw-r--r--</div>
<div style="top:340.9px;height:18px;line-height:18px;font-size:12.5px;color:#fff;white-space:pre;letter-spacing:-0.506px;left:897px;">babajzpb</div>
<div style="top:340.9px;height:18px;line-height:18px;font-size:12.5px;color:#fff;white-space:pre;letter-spacing:-0.912px;right:328.5px;">20 KB</div>
<div style="top:359.9px;height:18px;line-height:18px;font-size:12.5px;color:#fff;white-space:pre;letter-spacing:-0.892px;left:667.5px;">17.9.2020 20.02.51</div>
<div style="top:359.9px;height:18px;line-height:18px;font-size:12.5px;color:#fff;white-space:pre;letter-spacing:0.352px;left:817.5px;">rw-r--r--</div>
<div style="top:359.9px;height:18px;line-height:18px;font-size:12.5px;color:#fff;white-space:pre;letter-spacing:-0.506px;left:897px;">babajzpb</div>
<div style="top:359.9px;height:18px;line-height:18px;font-size:12.5px;color:#fff;white-space:pre;letter-spacing:-0.912px;right:328.5px;">22 KB</div>
<div style="top:379.0px;height:18px;line-height:18px;font-size:12.5px;color:#fff;white-space:pre;letter-spacing:-0.892px;left:667.5px;">17.9.2020 20.07.24</div>
<div style="top:379.0px;height:18px;line-height:18px;font-size:12.5px;color:#fff;white-space:pre;letter-spacing:0.352px;left:817.5px;">rw-r--r--</div>
<div style="top:379.0px;height:18px;line-height:18px;font-size:12.5px;color:#fff;white-space:pre;letter-spacing:-0.506px;left:897px;">babajzpb</div>
<div style="top:379.0px;height:18px;line-height:18px;font-size:12.5px;color:#fff;white-space:pre;letter-spacing:-1.102px;right:328.5px;">8 KB</div>
<div style="top:398.0px;height:18px;line-height:18px;font-size:12.5px;color:#fff;white-space:pre;letter-spacing:-0.892px;left:667.5px;">17.9.2020 20.07.24</div>
<div style="top:398.0px;height:18px;line-height:18px;font-size:12.5px;color:#fff;white-space:pre;letter-spacing:0.352px;left:817.5px;">rw-r--r--</div>
<div style="top:398.0px;height:18px;line-height:18px;font-size:12.5px;color:#fff;white-space:pre;letter-spacing:-0.506px;left:897px;">babajzpb</div>
<div style="top:398.0px;height:18px;line-height:18px;font-size:12.5px;color:#fff;white-space:pre;letter-spacing:-1.102px;right:328.5px;">7 KB</div>
<div style="top:417.0px;height:18px;line-height:18px;font-size:12.5px;color:#fff;white-space:pre;letter-spacing:-0.892px;left:667.5px;">17.9.2020 20.07.24</div>
<div style="top:417.0px;height:18px;line-height:18px;font-size:12.5px;color:#fff;white-space:pre;letter-spacing:0.352px;left:817.5px;">rw-r--r--</div>
<div style="top:417.0px;height:18px;line-height:18px;font-size:12.5px;color:#fff;white-space:pre;letter-spacing:-0.506px;left:897px;">babajzpb</div>
<div style="top:417.0px;height:18px;line-height:18px;font-size:12.5px;color:#fff;white-space:pre;letter-spacing:-1.102px;right:328.5px;">1 KB</div>
<div style="top:436.1px;height:18px;line-height:18px;font-size:12.5px;color:#fff;white-space:pre;letter-spacing:-0.892px;left:667.5px;">17.9.2020 20.07.24</div>
<div style="top:436.1px;height:18px;line-height:18px;font-size:12.5px;color:#fff;white-space:pre;letter-spacing:0.352px;left:817.5px;">rw-r--r--</div>
<div style="top:436.1px;height:18px;line-height:18px;font-size:12.5px;color:#fff;white-space:pre;letter-spacing:-0.506px;left:897px;">babajzpb</div>
<div style="top:436.1px;height:18px;line-height:18px;font-size:12.5px;color:#fff;white-space:pre;letter-spacing:-1.102px;right:328.5px;">3 KB</div>
<div style="top:455.1px;height:18px;line-height:18px;font-size:12.5px;color:#fff;white-space:pre;letter-spacing:-0.892px;left:667.5px;">17.9.2020 20.02.21</div>
<div style="top:455.1px;height:18px;line-height:18px;font-size:12.5px;color:#fff;white-space:pre;letter-spacing:0.519px;left:817.5px;">rw-------</div>
<div style="top:455.1px;height:18px;line-height:18px;font-size:12.5px;color:#fff;white-space:pre;letter-spacing:-0.506px;left:897px;">babajzpb</div>
<div style="top:455.1px;height:18px;line-height:18px;font-size:12.5px;color:#fff;white-space:pre;letter-spacing:-1.102px;right:328.5px;">4 KB</div>
<div style="top:474.1px;height:18px;line-height:18px;font-size:12.5px;color:#fff;white-space:pre;letter-spacing:-0.892px;left:667.5px;">17.9.2020 20.07.24</div>
<div style="top:474.1px;height:18px;line-height:18px;font-size:12.5px;color:#fff;white-space:pre;letter-spacing:0.352px;left:817.5px;">rw-r--r--</div>
<div style="top:474.1px;height:18px;line-height:18px;font-size:12.5px;color:#fff;white-space:pre;letter-spacing:-0.506px;left:897px;">babajzpb</div>
<div style="top:474.1px;height:18px;line-height:18px;font-size:12.5px;color:#fff;white-space:pre;letter-spacing:-1.102px;right:328.5px;">3 KB</div>
<div style="top:493.2px;height:18px;line-height:18px;font-size:12.5px;color:#fff;white-space:pre;letter-spacing:-0.892px;left:667.5px;">17.9.2020 20.07.24</div>
<div style="top:493.2px;height:18px;line-height:18px;font-size:12.5px;color:#fff;white-space:pre;letter-spacing:0.352px;left:817.5px;">rw-r--r--</div>
<div style="top:493.2px;height:18px;line-height:18px;font-size:12.5px;color:#fff;white-space:pre;letter-spacing:-0.506px;left:897px;">babajzpb</div>
<div style="top:493.2px;height:18px;line-height:18px;font-size:12.5px;color:#fff;white-space:pre;letter-spacing:-1.102px;right:328.5px;">4 KB</div>
<div style="top:512.2px;height:18px;line-height:18px;font-size:12.5px;color:#fff;white-space:pre;letter-spacing:-0.892px;left:667.5px;">17.9.2020 20.07.24</div>
<div style="top:512.2px;height:18px;line-height:18px;font-size:12.5px;color:#fff;white-space:pre;letter-spacing:0.352px;left:817.5px;">rw-r--r--</div>
<div style="top:512.2px;height:18px;line-height:18px;font-size:12.5px;color:#fff;white-space:pre;letter-spacing:-0.506px;left:897px;">babajzpb</div>
<div style="top:512.2px;height:18px;line-height:18px;font-size:12.5px;color:#fff;white-space:pre;letter-spacing:-1.102px;right:328.5px;">3 KB</div>
<div style="top:531.2px;height:18px;line-height:18px;font-size:12.5px;color:#fff;white-space:pre;letter-spacing:-0.892px;left:667.5px;">17.9.2020 20.07.24</div>
<div style="top:531.2px;height:18px;line-height:18px;font-size:12.5px;color:#fff;white-space:pre;letter-spacing:0.352px;left:817.5px;">rw-r--r--</div>
<div style="top:531.2px;height:18px;line-height:18px;font-size:12.5px;color:#fff;white-space:pre;letter-spacing:-0.506px;left:897px;">babajzpb</div>
<div style="top:531.2px;height:18px;line-height:18px;font-size:12.5px;color:#fff;white-space:pre;letter-spacing:-1.102px;right:328.5px;">4 KB</div>
<div style="top:550.2px;height:18px;line-height:18px;font-size:12.5px;color:#fff;white-space:pre;letter-spacing:-0.892px;left:667.5px;">17.9.2020 20.07.24</div>
<div style="top:550.2px;height:18px;line-height:18px;font-size:12.5px;color:#fff;white-space:pre;letter-spacing:0.352px;left:817.5px;">rw-r--r--</div>
<div style="top:550.2px;height:18px;line-height:18px;font-size:12.5px;color:#fff;white-space:pre;letter-spacing:-0.506px;left:897px;">babajzpb</div>
<div style="top:550.2px;height:18px;line-height:18px;font-size:12.5px;color:#fff;white-space:pre;letter-spacing:-0.912px;right:328.5px;">48 KB</div>
<div style="top:569.3px;height:18px;line-height:18px;font-size:12.5px;color:#fff;white-space:pre;letter-spacing:-0.892px;left:667.5px;">17.9.2020 20.07.24</div>
<div style="top:569.3px;height:18px;line-height:18px;font-size:12.5px;color:#fff;white-space:pre;letter-spacing:0.352px;left:817.5px;">rw-r--r--</div>
<div style="top:569.3px;height:18px;line-height:18px;font-size:12.5px;color:#fff;white-space:pre;letter-spacing:-0.506px;left:897px;">babajzpb</div>
<div style="top:569.3px;height:18px;line-height:18px;font-size:12.5px;color:#fff;white-space:pre;letter-spacing:-1.102px;right:328.5px;">9 KB</div>
<div style="top:588.3px;height:18px;line-height:18px;font-size:12.5px;color:#fff;white-space:pre;letter-spacing:-0.892px;left:667.5px;">17.9.2020 20.07.24</div>
<div style="top:588.3px;height:18px;line-height:18px;font-size:12.5px;color:#fff;white-space:pre;letter-spacing:0.352px;left:817.5px;">rw-r--r--</div>
<div style="top:588.3px;height:18px;line-height:18px;font-size:12.5px;color:#fff;white-space:pre;letter-spacing:-0.506px;left:897px;">babajzpb</div>
<div style="top:588.3px;height:18px;line-height:18px;font-size:12.5px;color:#fff;white-space:pre;letter-spacing:-0.912px;right:328.5px;">20 KB</div>
<div style="top:607.3px;height:18px;line-height:18px;font-size:12.5px;color:#fff;white-space:pre;letter-spacing:-0.892px;left:667.5px;">17.9.2020 20.07.24</div>
<div style="top:607.3px;height:18px;line-height:18px;font-size:12.5px;color:#fff;white-space:pre;letter-spacing:0.352px;left:817.5px;">rw-r--r--</div>
<div style="top:607.3px;height:18px;line-height:18px;font-size:12.5px;color:#fff;white-space:pre;letter-spacing:-0.506px;left:897px;">babajzpb</div>
<div style="top:607.3px;height:18px;line-height:18px;font-size:12.5px;color:#fff;white-space:pre;letter-spacing:-0.912px;right:328.5px;">31 KB</div>
<div style="top:626.4px;height:18px;line-height:18px;font-size:12.5px;color:#fff;white-space:pre;letter-spacing:-0.892px;left:667.5px;">17.9.2020 20.07.22</div>
<div style="top:626.4px;height:18px;line-height:18px;font-size:12.5px;color:#fff;white-space:pre;letter-spacing:0.352px;left:817.5px;">rw-r--r--</div>
<div style="top:626.4px;height:18px;line-height:18px;font-size:12.5px;color:#fff;white-space:pre;letter-spacing:-0.506px;left:897px;">babajzpb</div>
<div style="top:626.4px;height:18px;line-height:18px;font-size:12.5px;color:#fff;white-space:pre;letter-spacing:-1.102px;right:328.5px;">5 KB</div>
<div style="top:645.4px;height:18px;line-height:18px;font-size:12.5px;color:#fff;white-space:pre;letter-spacing:-0.892px;left:667.5px;">17.9.2020 20.07.24</div>
<div style="top:645.4px;height:18px;line-height:18px;font-size:12.5px;color:#fff;white-space:pre;letter-spacing:0.352px;left:817.5px;">rw-r--r--</div>
<div style="top:645.4px;height:18px;line-height:18px;font-size:12.5px;color:#fff;white-space:pre;letter-spacing:-0.506px;left:897px;">babajzpb</div>
<div style="top:645.4px;height:18px;line-height:18px;font-size:12.5px;color:#fff;white-space:pre;letter-spacing:-1.102px;right:328.5px;">4 KB</div>
<div style="top:398.0px;height:18px;line-height:18px;font-size:12.5px;color:#fff;white-space:pre;letter-spacing:-0.853px;left:461.2px;">php</div>
<div style="top:417.0px;height:18px;line-height:18px;font-size:12.5px;color:#fff;white-space:pre;letter-spacing:-0.346px;left:464.2px;">der.php</div>
<div style="top:436.1px;height:18px;line-height:18px;font-size:12.5px;color:#fff;white-space:pre;letter-spacing:-0.259px;left:464.2px;">ts-post.php</div>
<div style="top:455.1px;height:18px;line-height:18px;font-size:12.5px;color:#fff;white-space:pre;letter-spacing:-0.953px;left:461.3px;">np</div>
<div style="top:474.1px;height:18px;line-height:18px;font-size:12.5px;color:#fff;white-space:pre;letter-spacing:-0.464px;left:461.3px;">ample.php</div>
<div style="top:493.2px;height:18px;line-height:18px;font-size:12.5px;color:#fff;white-space:pre;left:457.7px;">p</div>
<div style="top:512.2px;height:18px;line-height:18px;font-size:12.5px;color:#fff;white-space:pre;letter-spacing:-0.522px;left:461.3px;">ml.php</div>
<div style="top:550.2px;height:18px;line-height:18px;font-size:12.5px;color:#fff;white-space:pre;left:459.3px;">p</div>
<div style="top:588.3px;height:18px;line-height:18px;font-size:12.5px;color:#fff;white-space:pre;letter-spacing:-0.886px;left:461.3px;">php</div>
<div style="top:607.3px;height:18px;line-height:18px;font-size:12.5px;color:#fff;white-space:pre;letter-spacing:-1.200px;left:462.8px;">hp</div>
<div style="top:626.4px;height:18px;line-height:18px;font-size:12.5px;color:#fff;white-space:pre;letter-spacing:-0.579px;left:462.8px;">k.php</div>
<div style="left:462px;top:303px;width:8px;height:16px;border:1px dotted #bbb;border-left:none;"></div>
<div style="left:2px;top:669px;width:362px;height:15px;background:#171717;"></div>
<div style="left:18.5px;top:669px;width:241.5px;height:15px;background:#4d4d4d;"></div>
<svg style="left:4px;top:671.3px" width="5" height="7.500" viewBox="0 0 5 7.500"><path d="M4.200 0.500L0.800 3.750L4.200 7" stroke="#a0a0a0" stroke-width="1.300" fill="none"/></svg>
<svg style="left:352.5px;top:671.3px" width="5" height="7.500" viewBox="0 0 5 7.500"><path d="M0.800 0.500L4.200 3.750L0.800 7" stroke="#a0a0a0" stroke-width="1.300" fill="none"/></svg>
<div style="left:0px;top:685px;width:981px;height:23px;background:#1f1f1f;"></div>
<div style="left:0px;top:707.5px;width:981px;height:1px;background:#484848;"></div>
<div style="top:687.7px;height:18px;line-height:18px;font-size:12.5px;color:#fff;white-space:pre;letter-spacing:-0.514px;left:4px;">0 B of 38 B in 0 of 1</div>
<div style="top:687.7px;height:18px;line-height:18px;font-size:12.5px;color:#fff;white-space:pre;letter-spacing:-0.585px;left:373.5px;">0 B of 188 KB in 0 of 23</div>
<div style="left:0px;top:708.5px;width:981px;height:19.5px;background:#1f1f1f;"></div>
<div style="left:0px;top:726px;width:981px;height:2px;background:#262626;"></div>
<div style="left:759px;top:709.5px;width:33px;height:18.5px;border:1px solid #363636;border-bottom:none;"></div>
<div style="left:794.5px;top:709.5px;width:67.0px;height:18.5px;border:1px solid #363636;border-bottom:none;"></div>
<div style="left:865px;top:709.5px;width:32px;height:18.5px;border:1px solid #363636;border-bottom:none;"></div>
<div style="left:899.5px;top:709.5px;width:70.5px;height:18.5px;border:1px solid #363636;border-bottom:none;"></div>
<div style="top:708.8px;height:18px;line-height:18px;font-size:12.5px;color:#fff;white-space:pre;letter-spacing:-1.177px;left:810px;">SFTP-3</div>
<div style="top:708.8px;height:18px;line-height:18px;font-size:12.5px;color:#fff;white-space:pre;letter-spacing:-0.788px;right:24.8px;">0.17.08</div>
<svg style="left:768px;top:710px" width="13.5" height="16" viewBox="0 0 13.5 16"><path d="M3.300 7.500V5a3.450 3.450 0 0 1 6.900 0V7.500" stroke="#e0b83c" stroke-width="1.900" fill="none"/><rect x="0.500" y="7" width="12.500" height="8.800" rx="1" fill="#f4c842"/><rect x="5.900" y="9.300" width="1.800" height="3.800" fill="#7a5c0c"/></svg>
<svg style="left:872px;top:710.5px" width="16" height="16" viewBox="0 0 16 16"><rect x="0" y="0.500" width="9.500" height="8" fill="#7c7c7c"/><rect x="8" y="0" width="5.500" height="12.500" fill="#8e8e8e"/><rect x="2" y="9" width="5" height="1.500" fill="#666"/><rect x="9.500" y="13" width="1.500" height="1.500" fill="#777"/><rect x="12" y="13" width="1.500" height="1.500" fill="#777"/></svg>
<svg style="left:970px;top:717px" width="10" height="10" viewBox="0 0 10 10"><g fill="#9a9a9a"><rect x="7" y="1" width="2" height="2"/><rect x="4" y="4" width="2" height="2"/><rect x="7" y="4" width="2" height="2"/><rect x="1" y="7" width="2" height="2"/><rect x="4" y="7" width="2" height="2"/><rect x="7" y="7" width="2" height="2"/></g></svg>
<div style="left:14px;top:282px;width:449px;height:387px;background:rgba(0,0,0,0.35);filter:blur(3px);"></div>
<div style="left:15px;top:283px;width:447px;height:385px;background:#f0f0f0;"></div>
<div style="left:15px;top:283px;width:447px;height:20.5px;background:#4d4b47;"></div>
<div style="top:286.5px;height:14px;line-height:14px;font-size:10px;color:#fff;white-space:pre;letter-spacing:-0.357px;left:19px;">Preferences</div>
<div style="top:286.5px;height:14px;line-height:14px;font-size:10px;color:#fff;white-space:pre;left:403px;">?</div>
<svg style="left:438px;top:289px" width="10" height="10" viewBox="0 0 10 10"><path d="M0.7 0.7L9.3 9.3M9.3 0.7L0.7 9.3" stroke="#fff" stroke-width="1.1" fill="none"/></svg>
<div style="left:22px;top:311px;width:95px;height:326px;background:#fff;border:1px solid #8a8f98;"></div>
<div style="left:25px;top:392.5px;width:31px;height:13px;background:#cce8ff;"></div>
<div style="top:313.8px;height:13px;line-height:13px;font-size:9.2px;color:#202020;white-space:pre;letter-spacing:-0.234px;left:27.8px;">Environment</div>
<div style="top:326.9px;height:13px;line-height:13px;font-size:9.2px;color:#202020;white-space:pre;letter-spacing:0.061px;left:43.4px;">Interface</div>
<div style="left:36px;top:333px;width:6px;height:1px;background:#aaa;"></div>
<div style="top:340.0px;height:13px;line-height:13px;font-size:9.2px;color:#202020;white-space:pre;letter-spacing:-0.281px;left:43.4px;">Window</div>
<div style="left:36px;top:347px;width:6px;height:1px;background:#aaa;"></div>
<div style="top:353.1px;height:13px;line-height:13px;font-size:9.2px;color:#202020;white-space:pre;letter-spacing:-0.540px;left:43.4px;">Commander</div>
<div style="left:36px;top:360px;width:6px;height:1px;background:#aaa;"></div>
<div style="top:366.2px;height:13px;line-height:13px;font-size:9.2px;color:#202020;white-space:pre;letter-spacing:-0.265px;left:43.4px;">Explorer</div>
<div style="left:36px;top:373px;width:6px;height:1px;background:#aaa;"></div>
<div style="top:379.4px;height:13px;line-height:13px;font-size:9.2px;color:#202020;white-space:pre;letter-spacing:-0.387px;left:43.4px;">Languages</div>
<div style="left:36px;top:386px;width:6px;height:1px;background:#aaa;"></div>
<div style="top:392.5px;height:13px;line-height:13px;font-size:9.2px;color:#202020;white-space:pre;letter-spacing:-0.432px;left:27.8px;">Panels</div>
<div style="top:405.6px;height:13px;line-height:13px;font-size:9.2px;color:#202020;white-space:pre;letter-spacing:-0.325px;left:43.4px;">File colors</div>
<div style="left:36px;top:412px;width:6px;height:1px;background:#aaa;"></div>
<div style="top:418.7px;height:13px;line-height:13px;font-size:9.2px;color:#202020;white-space:pre;letter-spacing:-0.412px;left:43.4px;">Remote</div>
<div style="left:36px;top:425px;width:6px;height:1px;background:#aaa;"></div>
<div style="top:431.8px;height:13px;line-height:13px;font-size:9.2px;color:#202020;white-space:pre;letter-spacing:-0.534px;left:43.4px;">Local</div>
<div style="left:36px;top:438px;width:6px;height:1px;background:#aaa;"></div>
<div style="top:444.9px;height:13px;line-height:13px;font-size:9.2px;color:#202020;white-space:pre;letter-spacing:-0.258px;left:27.8px;">Editors</div>
<div style="top:458.0px;height:13px;line-height:13px;font-size:9.2px;color:#202020;white-space:pre;letter-spacing:0.007px;left:43.4px;">Internal editor</div>
<div style="left:36px;top:465px;width:6px;height:1px;background:#aaa;"></div>
<div style="top:471.1px;height:13px;line-height:13px;font-size:9.2px;color:#202020;white-space:pre;letter-spacing:-0.072px;left:27.8px;">Transfer</div>
<div style="top:484.2px;height:13px;line-height:13px;font-size:9.2px;color:#202020;white-space:pre;letter-spacing:-0.278px;left:43.4px;">Drag &amp; Drop</div>
<div style="left:36px;top:491px;width:6px;height:1px;background:#aaa;"></div>
<div style="top:497.3px;height:13px;line-height:13px;font-size:9.2px;color:#202020;white-space:pre;letter-spacing:-0.355px;left:43.4px;">Background</div>
<div style="left:36px;top:504px;width:6px;height:1px;background:#aaa;"></div>
<div style="top:510.5px;height:13px;line-height:13px;font-size:9.2px;color:#202020;white-space:pre;letter-spacing:-0.317px;left:43.4px;">Endurance</div>
<div style="left:36px;top:517px;width:6px;height:1px;background:#aaa;"></div>
<div style="top:523.6px;height:13px;line-height:13px;font-size:9.2px;color:#202020;white-space:pre;letter-spacing:-0.129px;left:27.8px;">Network</div>
<div style="top:536.7px;height:13px;line-height:13px;font-size:9.2px;color:#202020;white-space:pre;letter-spacing:-0.238px;left:27.8px;">Security</div>
<div style="top:549.8px;height:13px;line-height:13px;font-size:9.2px;color:#202020;white-space:pre;letter-spacing:-0.415px;left:27.8px;">Logging</div>
<div style="top:562.9px;height:13px;line-height:13px;font-size:9.2px;color:#202020;white-space:pre;letter-spacing:0.007px;left:27.8px;">Integration</div>
<div style="top:576.0px;height:13px;line-height:13px;font-size:9.2px;color:#202020;white-space:pre;letter-spacing:-0.212px;left:43.4px;">Applications</div>
<div style="left:36px;top:582px;width:6px;height:1px;background:#aaa;"></div>
<div style="top:589.1px;height:13px;line-height:13px;font-size:9.2px;color:#202020;white-space:pre;letter-spacing:-0.548px;left:27.8px;">Commands</div>
<div style="top:602.2px;height:13px;line-height:13px;font-size:9.2px;color:#202020;white-space:pre;letter-spacing:-0.198px;left:27.8px;">Storage</div>
<div style="top:615.3px;height:13px;line-height:13px;font-size:9.2px;color:#202020;white-space:pre;letter-spacing:-0.276px;left:27.8px;">Updates</div>
<div style="left:35px;top:325px;width:1px;height:61px;background:#aaa;"></div>
<div style="left:35px;top:404px;width:1px;height:35px;background:#aaa;"></div>
<div style="left:35px;top:457px;width:1px;height:9px;background:#aaa;"></div>
<div style="left:35px;top:483px;width:1px;height:35px;background:#aaa;"></div>
<div style="left:35px;top:574px;width:1px;height:9px;background:#aaa;"></div>
<div style="left:134px;top:322px;width:317px;height:174px;border:1px solid #dcdcdc;"></div>
<div style="left:139px;top:317px;width:35px;height:10px;background:#f0f0f0;"></div>
<div style="top:315.5px;height:13px;line-height:13px;font-size:9.2px;color:#202020;white-space:pre;letter-spacing:-0.880px;left:140px;">Common</div>
<div style="left:134px;top:508px;width:317px;height:54px;border:1px solid #dcdcdc;"></div>
<div style="left:139px;top:503px;width:47px;height:10px;background:#f0f0f0;"></div>
<div style="top:501.5px;height:13px;line-height:13px;font-size:9.2px;color:#202020;white-space:pre;letter-spacing:-0.504px;left:140px;">Double-click</div>
<div style="left:134px;top:574px;width:317px;height:59px;border:1px solid #dcdcdc;"></div>
<div style="left:139px;top:569px;width:42px;height:10px;background:#f0f0f0;"></div>
<div style="top:567.5px;height:13px;line-height:13px;font-size:9.2px;color:#202020;white-space:pre;letter-spacing:-0.239px;left:140px;">Panel font</div>
<div style="left:146px;top:334.5px;width:11px;height:11px;background:#fff;border:1px solid #0078d7;"><svg style="left:0;top:0" width="9" height="9" viewBox="0 0 9 9"><path d="M1.3 4.6L3.5 6.9L7.8 1.8" stroke="#0078d7" stroke-width="1.2" fill="none"/></svg></div>
<div style="top:333.5px;height:13px;line-height:13px;font-size:9.2px;color:#202020;white-space:pre;letter-spacing:-0.102px;left:159.5px;"><u>S</u>how hidden files (Ctrl+Alt+H)</div>
<div style="left:146px;top:354.1px;width:11px;height:11px;background:#fff;border:1px solid #333;"><svg style="left:0;top:0" width="9" height="9" viewBox="0 0 9 9"><path d="M1.3 4.6L3.5 6.9L7.8 1.8" stroke="#222" stroke-width="1.2" fill="none"/></svg></div>
<div style="top:353.1px;height:13px;line-height:13px;font-size:9.2px;color:#202020;white-space:pre;letter-spacing:-0.126px;left:159.5px;">Default directory is <u>h</u>ome directory</div>
<div style="left:146px;top:373.9px;width:11px;height:11px;background:#fff;border:1px solid #333;"><svg style="left:0;top:0" width="9" height="9" viewBox="0 0 9 9"><path d="M1.3 4.6L3.5 6.9L7.8 1.8" stroke="#222" stroke-width="1.2" fill="none"/></svg></div>
<div style="top:372.9px;height:13px;line-height:13px;font-size:9.2px;color:#202020;white-space:pre;letter-spacing:-0.249px;left:159.5px;"><u>R</u>emember panels&#x27; state when switching sessions</div>
<div style="left:146px;top:393.4px;width:11px;height:11px;background:#fff;border:1px solid #333;"></div>
<div style="top:392.4px;height:13px;line-height:13px;font-size:9.2px;color:#202020;white-space:pre;letter-spacing:-0.258px;left:159.5px;">Select <u>w</u>hole name when renaming file</div>
<div style="left:146px;top:412.9px;width:11px;height:11px;background:#fff;border:1px solid #333;"></div>
<div style="top:411.9px;height:13px;line-height:13px;font-size:9.2px;color:#202020;white-space:pre;letter-spacing:-0.181px;left:159.5px;"><u>F</u>ull row select</div>
<div style="left:146px;top:432.7px;width:11px;height:11px;background:#fff;border:1px solid #333;"><svg style="left:0;top:0" width="9" height="9" viewBox="0 0 9 9"><path d="M1.3 4.6L3.5 6.9L7.8 1.8" stroke="#222" stroke-width="1.2" fill="none"/></svg></div>
<div style="top:431.7px;height:13px;line-height:13px;font-size:9.2px;color:#202020;white-space:pre;letter-spacing:-0.186px;left:159.5px;">Use <u>n</u>atural order numerical sorting</div>
<div style="top:451.5px;height:13px;line-height:13px;font-size:9.2px;color:#202020;white-space:pre;letter-spacing:-0.212px;left:146px;">Show file si<u>z</u>es in:</div>
<div style="top:473.5px;height:13px;line-height:13px;font-size:9.2px;color:#202020;white-space:pre;letter-spacing:-0.141px;left:146px;"><u>I</u>ncremental search:</div>
<div style="top:518.5px;height:13px;line-height:13px;font-size:9.2px;color:#202020;white-space:pre;letter-spacing:-0.113px;left:146px;"><u>O</u>peration to perform on double-click:</div>
<div style="left:349px;top:450.5px;width:89px;height:16.5px;background:#e1e1e1;border:1px solid #adadad;"></div>
<div style="top:453.1px;height:13px;line-height:13px;font-size:9.2px;color:#202020;white-space:pre;letter-spacing:-0.142px;left:352px;">Kilobytes</div>
<svg style="left:425px;top:456.25px" width="8" height="5" viewBox="0 0 8 5"><path d="M0.5 0.5L4 4L7.5 0.5" stroke="#444" stroke-width="1" fill="none"/></svg>
<div style="left:310px;top:472.5px;width:128px;height:16.5px;background:#e1e1e1;border:1px solid #adadad;"></div>
<div style="top:475.1px;height:13px;line-height:13px;font-size:9.2px;color:#202020;white-space:pre;letter-spacing:-0.229px;left:313px;">Beginning of name only</div>
<svg style="left:425px;top:478.25px" width="8" height="5" viewBox="0 0 8 5"><path d="M0.5 0.5L4 4L7.5 0.5" stroke="#444" stroke-width="1" fill="none"/></svg>
<div style="left:349px;top:516.5px;width:89px;height:16.5px;background:#e1e1e1;border:1px solid #adadad;"></div>
<div style="top:519.0px;height:13px;line-height:13px;font-size:9.2px;color:#202020;white-space:pre;letter-spacing:-0.211px;left:352px;">Edit</div>
<svg style="left:425px;top:522.25px" width="8" height="5" viewBox="0 0 8 5"><path d="M0.5 0.5L4 4L7.5 0.5" stroke="#444" stroke-width="1" fill="none"/></svg>
<div style="left:160px;top:540.5px;width:11px;height:11px;background:#fff;border:1px solid #c8c8c8;"></div>
<div style="top:539.5px;height:13px;line-height:13px;font-size:9.2px;color:#a0a0a0;white-space:pre;letter-spacing:-0.206px;left:172.5px;"><u>C</u>onfirm copy on double-click operation</div>
<div style="left:146.5px;top:586.8px;width:11px;height:11px;background:#fff;border:1px solid #333;"></div>
<div style="top:585.8px;height:13px;line-height:13px;font-size:9.2px;color:#202020;white-space:pre;letter-spacing:-0.159px;left:159px;"><u>U</u>se custom font</div>
<div style="left:147.5px;top:605px;width:104px;height:18.5px;background:#e1e1e1;border:1px solid #adadad;"></div>
<div style="top:608.2px;height:13px;line-height:13px;font-size:9.2px;color:#202020;white-space:pre;letter-spacing:0.066px;left:173.5px;">Select fon<u>t</u>...</div>
<div style="left:264px;top:582px;width:174.5px;height:42.5px;background:#fff;"></div>
<div style="top:582.3px;height:13px;line-height:13px;font-size:9.2px;color:#202020;white-space:pre;letter-spacing:-0.125px;left:265px;">Segoe UI, 9 pt</div>
<div style="top:594.8px;height:13px;line-height:13px;font-size:9.2px;color:#202020;white-space:pre;letter-spacing:0.099px;left:265px;">The Quick Brown Fox Jumps Over The</div>
<div style="top:608.0px;height:13px;line-height:13px;font-size:9.2px;color:#202020;white-space:pre;letter-spacing:0.021px;left:265px;">Lazy Dog</div>
<div style="left:247.5px;top:644px;width:59.5px;height:18px;background:#e1e1e1;border:2px solid #0078d7;"></div>
<div style="top:647.0px;height:13px;line-height:13px;font-size:9.2px;color:#202020;white-space:pre;letter-spacing:-0.641px;left:271.25px;">OK</div>
<div style="left:319px;top:644px;width:59.5px;height:18px;background:#e1e1e1;border:1px solid #adadad;"></div>
<div style="top:647.0px;height:13px;line-height:13px;font-size:9.2px;color:#202020;white-space:pre;letter-spacing:-0.268px;left:335.25px;">Cancel</div>
<div style="left:391px;top:644px;width:59.5px;height:18px;background:#e1e1e1;border:1px solid #adadad;"></div>
<div style="top:647.0px;height:13px;line-height:13px;font-size:9.2px;color:#202020;white-space:pre;letter-spacing:-0.477px;left:412.25px;">Help</div>
<svg style="left:125px;top:318px" width="182" height="44" viewBox="0 0 182 44"><ellipse cx="90.4" cy="22" rx="84" ry="14.3" fill="none" stroke="#e57a3c" stroke-width="3.3" stroke-dasharray="11 6" stroke-dashoffset="4"/></svg>
<div style="left:480px;top:159px;width:212px;height:146px;background:rgba(0,0,0,0.4);filter:blur(3px);"></div>
<div style="left:479px;top:158px;width:210.5px;height:143.5px;background:#2b2b2b;border:1px solid #5a5a5a;"></div>
<div style="left:480px;top:159px;width:24px;height:141.5px;background:#1d1d1d;"></div>
<div style="left:480px;top:158px;width:60px;height:1px;background:#2b2b2b;"></div>
<div style="top:162.0px;height:17px;line-height:17px;font-size:12px;color:#fff;white-space:pre;letter-spacing:0.078px;left:511px;"><u>E</u>dit</div>
<div style="top:162.0px;height:17px;line-height:17px;font-size:12px;color:#fff;white-space:pre;letter-spacing:-1.008px;right:309.0px;">F4</div>
<div style="left:511px;top:182.5px;width:177px;height:1px;background:#555;"></div>
<div style="top:186.8px;height:17px;line-height:17px;font-size:12px;color:#fff;white-space:pre;letter-spacing:0.041px;left:511px;"><u>I</u>nternal editor</div>
<div style="top:186.8px;height:17px;line-height:17px;font-size:12px;color:#fff;white-space:pre;letter-spacing:0.119px;right:309.0px;">Ctrl+Alt+F4</div>
<div style="left:511px;top:207.5px;width:177px;height:1px;background:#555;"></div>
<div style="top:211.5px;height:17px;line-height:17px;font-size:12px;color:#fff;white-space:pre;letter-spacing:0.089px;left:511px;">Notepad</div>
<div style="top:233.8px;height:17px;line-height:17px;font-size:12px;color:#fff;white-space:pre;letter-spacing:0.179px;left:511px;">Notepad++</div>
<div style="top:255.8px;height:17px;line-height:17px;font-size:12px;color:#fff;white-space:pre;letter-spacing:-0.168px;left:511px;">Edit <u>W</u>ith...</div>
<div style="left:511px;top:276px;width:177px;height:1px;background:#555;"></div>
<div style="left:480.5px;top:278px;width:208px;height:22.5px;background:#b4d8f5;border:1px solid #3c9be8;"></div>
<div style="top:281.0px;height:17px;line-height:17px;font-size:12px;color:#000;white-space:pre;left:511px;"><u>C</u>onfigure...</div>
<svg style="left:483px;top:161.5px" width="17" height="17" viewBox="0 0 17 17"><rect x="0.5" y="3" width="12.5" height="13.5" fill="#f4f6f9" stroke="#9aa5b4" stroke-width="0.8"/><path d="M2.5 7h8M2.5 9.5h8M2.5 12h6" stroke="#c9d2de" stroke-width="0.9"/><path d="M5.2 12.6L13.6 1.6l2.6 2L7.8 14.6L4.6 15.6z" fill="#f1b32c"/><path d="M13.6 1.6l2.6 2l0.8-1.2l-2.4-1.9z" fill="#d96b5a"/><path d="M5.2 12.6l2.6 2L4.6 15.6z" fill="#3a3a3a"/><path d="M6.4 11.2L14.7 0.6" stroke="#c98a1a" stroke-width="0.7"/></svg>
<svg style="left:484px;top:281.2px" width="16" height="16" viewBox="0 0 16 16"><g transform="translate(8 8) rotate(22.5)"><path d="M5.60 -1.07L7.55 -0.89L7.55 0.89L5.60 1.07L4.71 3.20L5.97 4.71L4.71 5.97L3.20 4.71L1.07 5.60L0.89 7.55L-0.89 7.55L-1.07 5.60L-3.20 4.71L-4.71 5.97L-5.97 4.71L-4.71 3.20L-5.60 1.07L-7.55 0.89L-7.55 -0.89L-5.60 -1.07L-4.71 -3.20L-5.97 -4.71L-4.71 -5.97L-3.20 -4.71L-1.07 -5.60L-0.89 -7.55L0.89 -7.55L1.07 -5.60L3.20 -4.71L4.71 -5.97L5.97 -4.71L4.71 -3.20Z" fill="#c5ccd5" stroke="#737b86" stroke-width="0.600"/><circle r="2.500" fill="#b4d8f5"/><circle r="3.600" fill="none" stroke="#737b86" stroke-width="0.700"/></g></svg>
<div style="left:563px;top:311px;width:211px;height:52px;background:rgba(0,0,0,0.35);filter:blur(2px);"></div>
<div style="left:562px;top:309.5px;width:210px;height:50.5px;background:#fff;border:1px solid #d0d0d0;"></div>
<div style="top:315.1px;height:17px;line-height:17px;font-size:12px;color:#000;white-space:pre;font-weight:700;letter-spacing:-0.186px;left:568px;">Configure</div>
<div style="top:339.8px;height:17px;line-height:17px;font-size:12px;color:#1a1a1a;white-space:pre;letter-spacing:-0.120px;left:578px;">Customize editors</div>
</div></body></html>
